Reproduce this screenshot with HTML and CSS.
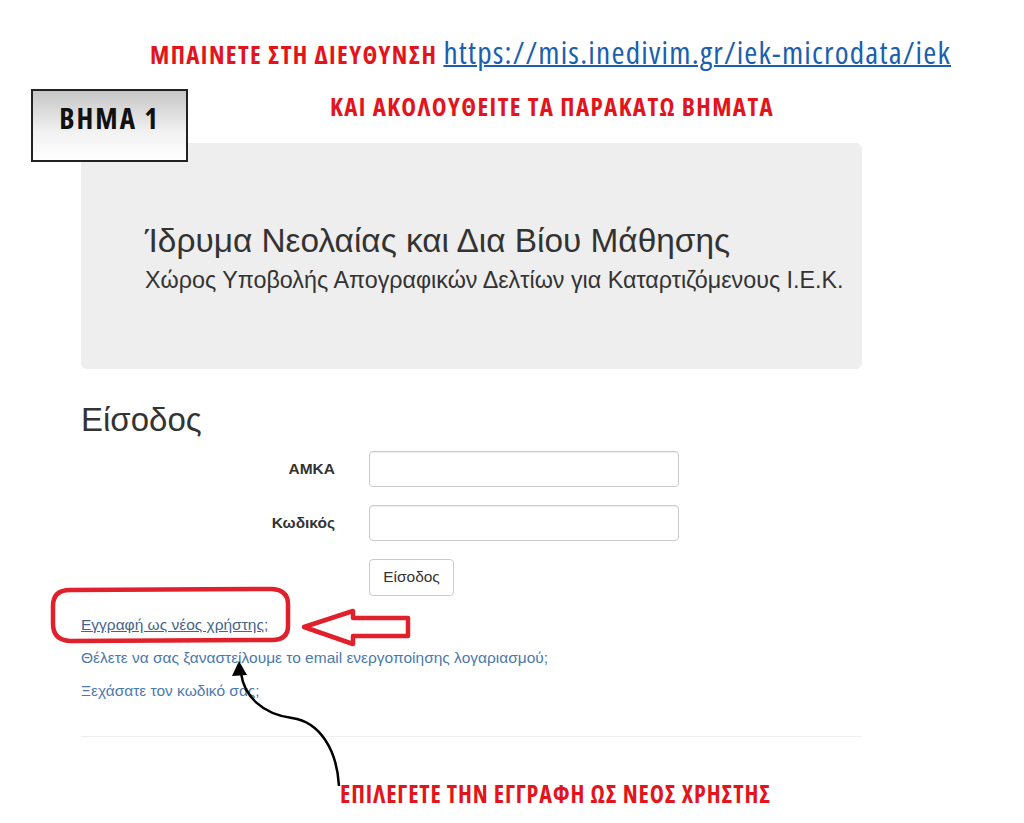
FILE: index.html
```html
<!DOCTYPE html>
<html lang="el">
<head>
    <meta charset="UTF-8">
    <meta name="viewport" content="width=device-width, initial-scale=1.0">
    <title>ΒΗΜΑ 1 - Εγγραφή</title>
    <link rel="stylesheet" href="styles.css">
</head>
<body>
    <div class="notes">
        <div class="address">
            <span class="red-note">ΜΠΑΙΝΕΤΕ ΣΤΗ ΔΙΕΥΘΥΝΣΗ</span>
            <a class="url" href="#">https://mis.inedivim.gr/iek-microdata/iek</a>
        </div>
        <div class="red-note follow">ΚΑΙ ΑΚΟΛΟΥΘΕΙΤΕ ΤΑ ΠΑΡΑΚΑΤΩ ΒΗΜΑΤΑ</div>
    </div>

    <div class="site">
        <div class="jumbotron">
            <h1>Ίδρυμα Νεολαίας και Δια Βίου Μάθησης</h1>
            <p>Χώρος Υποβολής Απογραφικών Δελτίων για Καταρτιζόμενους Ι.Ε.Κ.</p>
        </div>

        <h2>Είσοδος</h2>
        <form class="login-form">
            <label for="amka">ΑΜΚΑ</label>
            <input id="amka" type="text">
            <label for="password">Κωδικός</label>
            <input id="password" type="password">
            <button type="button">Είσοδος</button>
        </form>

        <ul class="links">
            <li><a class="register" href="#">Εγγραφή ως νέος χρήστης;</a></li>
            <li><a href="#">Θέλετε να σας ξαναστείλουμε το email ενεργοποίησης λογαριασμού;</a></li>
            <li><a href="#">Ξεχάσατε τον κωδικό σας;</a></li>
        </ul>
        <hr>
    </div>

    <div class="red-note choose">ΕΠΙΛΕΓΕΤΕ ΤΗΝ ΕΓΓΡΑΦΗ ΩΣ ΝΕΟΣ ΧΡΗΣΤΗΣ</div>

    <!-- annotations drawn over the screenshot -->
    <div class="step-box">ΒΗΜΑ 1</div>
    <svg class="marks" width="1024" height="823" viewBox="0 0 1024 823">
        <path class="ring" d="M70 590 L272 589 Q288 590 288 604 L288 626 Q288 640 272 640 L70 641 Q53 640 53 624 L53 606 Q53 590 70 590 Z"/>
        <polygon class="ring" points="304,627 353,611 353,618 408,618 408,636 353,636 353,644"/>
        <path class="curve" d="M339 786 C337 750 320 722 292 718 C262 714 244 696 241 673"/>
        <polygon class="head" points="239,661 232,676 247,675"/>
    </svg>
</body>
</html>
```

FILE: styles.css
```css
body {
    margin: 0;
    width: 1024px;
    height: 823px;
    position: relative;
    overflow: hidden;
    background: #fff;
    font-family: "Liberation Sans", Arial, sans-serif;
    color: #333;
}

.notes {
    padding-top: 36px;
}

.address {
    display: flex;
    align-items: baseline;
    gap: 6px;
    margin-left: 150px;
    white-space: nowrap;
}

.red-note {
    font-family: "Open Sans", sans-serif;
    font-stretch: condensed;
    font-weight: bold;
    font-size: 25px;
    letter-spacing: 1.4px;
    line-height: 1;
    color: #e3141c;
    white-space: nowrap;
}

.url {
    font-family: "Open Sans", sans-serif;
    font-stretch: condensed;
    font-size: 31.5px;
    letter-spacing: 1.2px;
    line-height: 1;
    color: #1b5fae;
    text-decoration: underline;
    text-decoration-thickness: 2px;
}

.follow {
    margin: 26px 0 0 330px;
}

.site {
    width: 781px;
    margin: 24px 0 0 81px;
}

.jumbotron {
    height: 226px;
    box-sizing: border-box;
    padding: 80px 0 0 64px;
    background: #eee;
    border-radius: 6px;
}

.jumbotron h1 {
    margin: 0;
    font-size: 33.4px;
    font-weight: normal;
    line-height: 1.1;
}

.jumbotron p {
    margin: 8px 0 0;
    font-size: 23.3px;
    line-height: 1.2;
    white-space: nowrap;
}

h2 {
    margin: 33px 0 0;
    font-size: 33px;
    font-weight: normal;
    line-height: 36px;
}

.login-form {
    display: grid;
    grid-template-columns: 254px 310px;
    column-gap: 34px;
    row-gap: 18px;
    margin-top: 13px;
}

.login-form label {
    text-align: right;
    font-size: 15.5px;
    font-weight: bold;
    line-height: 36px;
}

.login-form input {
    height: 36px;
    box-sizing: border-box;
    margin: 0;
    border: 1px solid #ccc;
    border-radius: 4px;
    box-shadow: inset 0 1px 1px rgba(0, 0, 0, 0.075);
}

.login-form button {
    grid-column: 2;
    justify-self: start;
    height: 37px;
    width: 85px;
    padding: 0;
    font-family: "Liberation Sans", Arial, sans-serif;
    font-size: 15.5px;
    color: #333;
    background: #fff;
    border: 1px solid #ccc;
    border-radius: 4px;
}

.links {
    list-style: none;
    margin: 19px 0 0;
    padding: 0;
}

.links li {
    font-size: 15.5px;
    line-height: 20px;
    margin-bottom: 13px;
    white-space: nowrap;
}

.links a {
    color: #4b79ad;
    text-decoration: none;
}

.links a.register {
    color: #46648a;
    text-decoration: underline;
}

hr {
    margin: 35px 0 0;
    border: 0;
    border-top: 1px solid #eee;
}

.choose {
    margin: 45px 0 0 340px;
    font-size: 24px;
    letter-spacing: 0.9px;
}

.step-box {
    position: absolute;
    left: 31px;
    top: 89px;
    width: 157px;
    height: 73px;
    box-sizing: border-box;
    padding-bottom: 16px;
    border: 2px solid #222;
    background: linear-gradient(#c6c6c6, #f2f2f2 60%, #fff);
    display: flex;
    align-items: center;
    justify-content: center;
    font-family: "Open Sans", sans-serif;
    font-stretch: condensed;
    font-weight: bold;
    font-size: 29px;
    letter-spacing: 2px;
    color: #111;
}

.marks {
    position: absolute;
    left: 0;
    top: 0;
    pointer-events: none;
}

.ring {
    fill: none;
    stroke: #e0202b;
    stroke-width: 4.5;
    stroke-linejoin: round;
}

.curve {
    fill: none;
    stroke: #000;
    stroke-width: 2.5;
}

.head {
    fill: #000;
}
```
